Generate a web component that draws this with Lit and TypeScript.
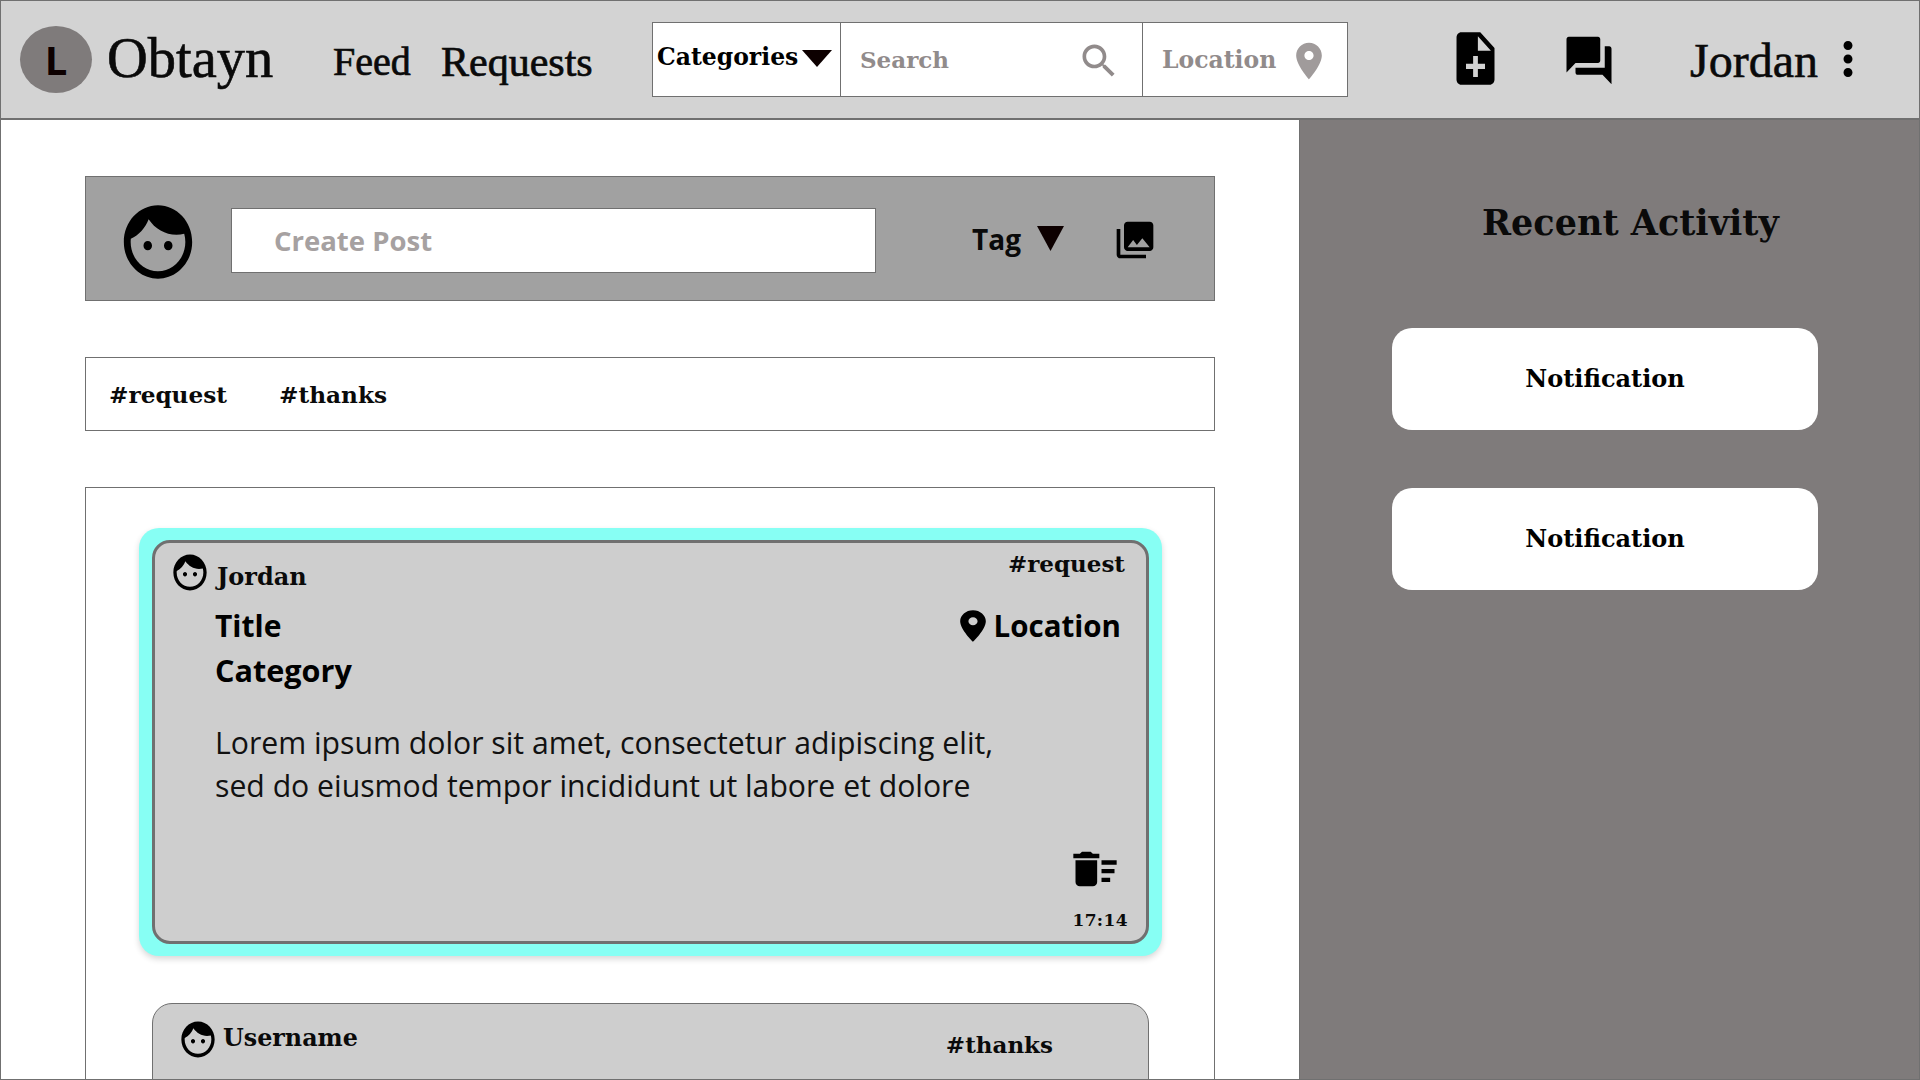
import { LitElement, html, css, svg } from "lit";
import { customElement } from "lit/decorators.js";

const P = {
  face: "M9 11.75c-.69 0-1.25.56-1.25 1.25s.56 1.25 1.25 1.25 1.25-.56 1.25-1.25-.56-1.25-1.25-1.25zm6 0c-.69 0-1.25.56-1.25 1.25s.56 1.25 1.25 1.25 1.25-.56 1.25-1.25-.56-1.25-1.25-1.25zM12 2C6.48 2 2 6.48 2 12s4.48 10 10 10 10-4.48 10-10S17.52 2 12 2zm0 18c-4.41 0-8-3.59-8-8 0-.29.02-.58.05-.86 2.36-1.05 4.23-2.98 5.21-5.37C11.07 8.33 14.05 10 17.42 10c.78 0 1.53-.09 2.25-.26.21.71.33 1.47.33 2.26 0 4.41-3.59 8-8 8z",
  place: "M12 2C8.13 2 5 5.13 5 9c0 5.25 7 13 7 13s7-7.75 7-13c0-3.87-3.13-7-7-7zm0 9.5c-1.38 0-2.5-1.12-2.5-2.5s1.12-2.5 2.5-2.5 2.5 1.12 2.5 2.5-1.12 2.5-2.5 2.5z",
  search: "M15.5 14h-.79l-.28-.27C15.41 12.59 16 11.11 16 9.5 16 5.91 13.09 3 9.5 3S3 5.91 3 9.5 5.91 16 9.5 16c1.61 0 3.09-.59 4.23-1.57l.27.28v.79l5 4.99L20.49 19l-4.99-5zm-6 0C7.01 14 5 11.99 5 9.5S7.01 5 9.5 5 14 7.01 14 9.5 11.99 14 9.5 14z",
  note: "M14 2H6c-1.1 0-1.99.9-1.99 2L4 20c0 1.1.89 2 1.99 2H18c1.1 0 2-.9 2-2V8l-6-6zm2 14h-3v3h-2v-3H8v-2h3v-3h2v3h3v2zm-3-7V3.5L18.5 9H13z",
  chat: "M21 6h-2v9H6v2c0 .55.45 1 1 1h11l4 4V7c0-.55-.45-1-1-1zm-4 6V3c0-.55-.45-1-1-1H3c-.55 0-1 .45-1 1v14l4-4h10c.55 0 1-.45 1-1z",
  photos: "M22 16V4c0-1.1-.9-2-2-2H8c-1.1 0-2 .9-2 2v12c0 1.1.9 2 2 2h12c1.1 0 2-.9 2-2zm-11-4l2.03 2.71L16 11l4 5H8l3-4zM2 6v14c0 1.1.9 2 2 2h14v-2H4V6H2z",
  sweep: "M15 16h4v2h-4zm0-8h7v2h-7zm0 4h6v2h-6zM3 18c0 1.1.9 2 2 2h6c1.1 0 2-.9 2-2V8H3v10zM14 5h-3l-1-1H6L5 5H2v2h12z",
  dots: "M12 8c1.1 0 2-.9 2-2s-.9-2-2-2-2 .9-2 2 .9 2 2 2zm0 2c-1.1 0-2 .9-2 2s.9 2 2 2 2-.9 2-2-.9-2-2-2zm0 6c-1.1 0-2 .9-2 2s.9 2 2 2 2-.9 2-2-.9-2-2-2z",
};

const icon = (d: string, cls: string, vb = "0 0 24 24") => html`<svg class=${cls} viewBox=${vb} preserveAspectRatio="none" aria-hidden="true">${svg`<path d=${d} fill="currentColor"></path>`}</svg>`;
const tri = (cls: string) => html`<svg class=${cls} viewBox="0 0 10 10" preserveAspectRatio="none" aria-hidden="true">${svg`<polygon points="0,0 10,0 5,10" fill="#0d0000"></polygon>`}</svg>`;

@customElement("app-root")
export class AppRoot extends LitElement {
  static styles = css`
    :host {
      display: flex; flex-direction: column; width: 1920px; height: 1080px; box-sizing: border-box;
      border: 1px solid #707070; overflow: hidden; background: #fff; color: #0a0a0a;
      font-family: "DejaVu Serif", serif;
    }
    svg { display: block; flex: none; }
    .top { flex: none; height: 119px; box-sizing: border-box; background: #d3d3d3; border-bottom: 2px solid #707070; display: flex; align-items: flex-start; }
    .logo { width: 72px; height: 67px; margin: 25px 0 0 19px; border-radius: 50%; background: #7f7b7b; display: flex; align-items: center; justify-content: center; font: 700 40px "Open Sans", sans-serif; color: #0d0000; flex: none; }
    .brand { margin: 22px 0 0 15px; width: 166px; font: 400 56.5px/70px "Liberation Serif", serif; -webkit-text-stroke: .6px #0a0a0a; }
    .nav { font: 400 41.5px/50px "Liberation Serif", serif; -webkit-text-stroke: .7px #0a0a0a; margin-top: 36px; }
    .feed { margin-left: 60px; width: 108px; font-size: 40px; }
    .req { width: 211px; font-size: 42px; }
    .bar { flex: none; width: 696px; height: 75px; margin-top: 21px; display: flex; box-sizing: border-box; border: 1px solid #707070; background: #fff; }
    .bar > div { display: flex; align-items: center; box-sizing: border-box; height: 100%; }
    .cat { width: 188px; padding-left: 4px; border-right: 1px solid #707070; font-size: 23.5px; font-weight: 700; color: #000; }
    .cat span { position: relative; top: -3px; }
    .cat-t { width: 30px; height: 17px; margin-left: 4px; margin-top: -2px; }
    .srch { width: 302px; padding-left: 19px; border-right: 1px solid #707070; color: #918b8b; font-size: 23px; font-weight: 700; }
    .srch span { width: 217px; }
    .srch-i { width: 44px; height: 44px; margin-top: 2px; }
    .loc { flex: 1; padding-left: 19px; color: #918b8b; font-size: 23.5px; font-weight: 700; }
    .loc-i { width: 44px; height: 44px; margin-left: 11px; margin-top: 3px; color: #a09b9b; }
    .note { width: 57px; height: 63px; margin: 26px 0 0 99px; color: #000; }
    .chat { width: 54px; height: 57px; margin: 31px 0 0 58px; color: #000; }
    .user { font: 400 48px/56px "Liberation Serif", serif; -webkit-text-stroke: .6px #0a0a0a; margin: 32px 0 0 74px; }
    .dots { width: 54px; height: 54px; margin: 31px 0 0 3px; color: #000; }

    .body { flex: 1; display: flex; min-height: 0; }
    .main { width: 1298px; flex: none; box-sizing: border-box; padding: 56px 0 0 84px; display: flex; flex-direction: column; overflow: hidden; }
    .side { flex: 1; background: #7f7b7b; border-left: 1px solid #707070; box-sizing: border-box; padding-top: 80px; }
    .side h2 { margin: 0 0 0 182px; font-size: 35px; line-height: 46px; font-weight: 700; white-space: nowrap; }
    .ncard { width: 426px; height: 102px; box-sizing: border-box; padding-bottom: 2px; margin: 58px 0 0 92px; background: #fff; border-radius: 20px; display: flex; align-items: center; justify-content: center; font-size: 24px; font-weight: 700; color: #000; }
    .side h2 + .ncard { margin-top: 82px; }

    .create { width: 1130px; height: 125px; box-sizing: border-box; border: 1px solid #707070; background: #a1a1a1; display: flex; flex: none; align-items: flex-start; }
    .cface { width: 82px; height: 88px; margin: 21px 0 0 31px; color: #000; }
    .input { width: 645px; height: 65px; margin: 31px 0 0 32px; box-sizing: border-box; border: 1px solid #707070; background: #fff; padding-left: 42px; display: flex; align-items: center; font: 700 27.5px "Open Sans", sans-serif; color: #a6a1a1; }
    .tag { font: 700 28px/40px "Open Sans", sans-serif; margin: 42px 0 0 96px; color: #0a0a0a; }
    .tag-t { width: 27px; height: 25px; margin: 49px 0 0 16px; }
    .pics { width: 44px; height: 44px; margin: 41px 0 0 49px; color: #000; }

    .tags { flex: none; width: 1130px; height: 74px; margin-top: 56px; box-sizing: border-box; border: 1px solid #707070; display: flex; align-items: center; padding: 0 0 0 23px; gap: 52px; font-size: 23.2px; font-weight: 700; }

    .list { flex: none; width: 1130px; height: 640px; margin-top: 56px; box-sizing: border-box; border: 1px solid #707070; padding: 40px 0 0 53px; display: flex; flex-direction: column; }
    .glow { flex: none; width: 1023px; height: 428px; box-sizing: border-box; padding: 12px 13px; background: #87fff4; border-radius: 20px; box-shadow: 0 3px 6px rgba(0,0,0,.16); }
    .card { height: 100%; box-sizing: border-box; background: #cecece; border: 3px solid #707070; border-radius: 18px; padding: 12px 13px 0 18px; display: flex; flex-direction: column; }
    .row { display: flex; justify-content: space-between; align-items: flex-start; }
    .who { display: flex; align-items: flex-start; font-size: 24px; font-weight: 700; }
    .fsm { width: 40px; height: 43px; margin: -4px 7px 0 -3px; color: #000; }
    .who span { margin-top: 7px; line-height: 30px; }
    .h { font-size: 23px; font-weight: 700; line-height: 30px; margin: -6px 8px 0 0; }
    .who-row { height: 48px; }
    .sans { font: 700 30px/45px "Open Sans", sans-serif; margin: 1px 0 -1px 42px; color: #000; }
    .category { font-size: 30.6px; }
    .title-row { margin-left: 42px; height: 44px; }
    .title-row .sans { margin: 1px 0 0; line-height: 44px; }
    .title-row .l { font-size: 29.5px; margin-right: 12px; display: flex; align-items: center; }
    .pin { width: 44px; height: 38px; margin-right: -1px; margin-left: -2px; color: #000; }
    .text { margin: 29px 0 0 42px; font: 400 30.2px/43px "Open Sans", sans-serif; color: #111; white-space: nowrap; }
    .foot { margin-top: auto; display: flex; flex-direction: column; align-items: flex-end; padding-bottom: 8px; }
    .sweep { width: 52px; height: 52px; margin: 0 12px 0 0; color: #000; }
    .time { font-size: 17px; font-weight: 700; line-height: 26px; margin: 12px 5px 0 0; color: #0a0a0a; letter-spacing: .4px; }

    .plain { flex: none; width: 997px; height: 200px; margin: 47px 0 0 13px; box-sizing: border-box; background: #cecece; border: 1px solid #707070; border-radius: 20px; padding: 14px 0 0 29px; display: flex; justify-content: space-between; align-items: flex-start; }
    .plain .who { font-size: 23.8px; }
    .plain .who span { margin-top: 4px; line-height: 32px; }
    .plain .fsm { margin: 0 5px 0 -4px; }
    .plain .h { margin: 12px 95px 0 0; }
  `;

  render() {
    return html`
      <header class="top">
        <div class="logo">L</div>
        <div class="brand">Obtayn</div>
        <div class="nav feed">Feed</div>
        <div class="nav req">Requests</div>
        <div class="bar">
          <div class="cat"><span>Categories</span>${tri("cat-t")}</div>
          <div class="srch"><span>Search</span>${icon(P.search, "srch-i")}</div>
          <div class="loc"><span>Location</span>${icon(P.place, "loc-i")}</div>
        </div>
        ${icon(P.note, "note")}
        ${icon(P.chat, "chat")}
        <div class="user">Jordan</div>
        ${icon(P.dots, "dots")}
      </header>
      <div class="body">
        <main class="main">
          <section class="create">
            ${icon(P.face, "cface")}
            <div class="input">Create Post</div>
            <div class="tag">Tag</div>
            ${tri("tag-t")}
            ${icon(P.photos, "pics")}
          </section>
          <section class="tags"><span>#request</span><span>#thanks</span></section>
          <section class="list">
            <div class="glow">
              <article class="card">
                <div class="row who-row">
                  <div class="who">${icon(P.face, "fsm")}<span>Jordan</span></div>
                  <div class="h">#request</div>
                </div>
                <div class="row title-row">
                  <div class="sans">Title</div>
                  <div class="sans l">${icon(P.place, "pin")}Location</div>
                </div>
                <div class="sans category">Category</div>
                <div class="text">Lorem ipsum dolor sit amet, consectetur adipiscing elit,<br />sed do eiusmod tempor incididunt ut labore et dolore</div>
                <div class="foot">
                  ${icon(P.sweep, "sweep")}
                  <div class="time">17:14</div>
                </div>
              </article>
            </div>
            <article class="plain">
              <div class="who">${icon(P.face, "fsm")}<span>Username</span></div>
              <div class="h">#thanks</div>
            </article>
          </section>
        </main>
        <aside class="side">
          <h2>Recent Activity</h2>
          <div class="ncard">Notification</div>
          <div class="ncard">Notification</div>
        </aside>
      </div>
    `;
  }
}
